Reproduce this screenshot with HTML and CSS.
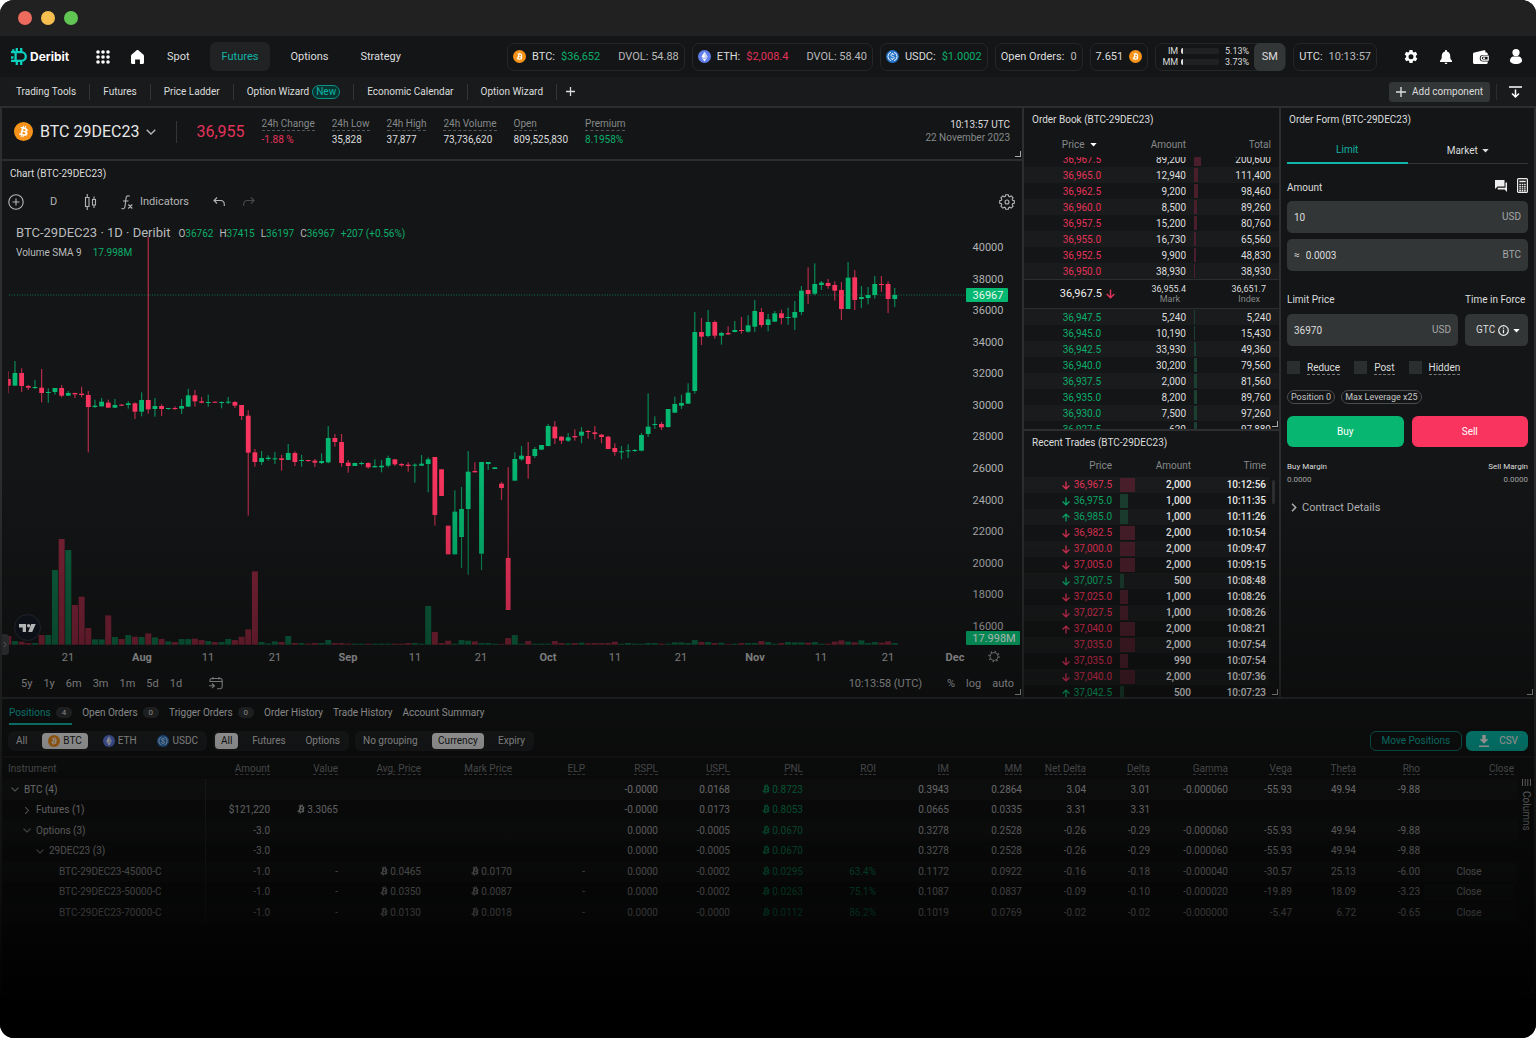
FILE: index.html
```html
<!DOCTYPE html>
<html lang="en">
<head>
<meta charset="utf-8">
<title>Deribit – BTC 29DEC23</title>
<meta name="viewport" content="width=device-width, initial-scale=1">
<link rel="stylesheet" href="styles.css">
</head>
<body>
<svg class="sprite" aria-hidden="true">
  <symbol id="btc-mark" viewBox="8 5.500 16 21"><path fill="currentColor" d="M23.189 14.02c.314-2.096-1.283-3.223-3.465-3.975l.708-2.84-1.728-.43-.69 2.765c-.454-.114-.92-.22-1.385-.326l.695-2.783L15.596 6l-.708 2.839c-.376-.086-.746-.17-1.104-.26l.002-.009-2.384-.595-.46 1.846s1.283.294 1.256.312c.7.175.826.638.805 1.006l-.806 3.235c.048.012.11.03.18.057l-.183-.045-1.13 4.532c-.086.212-.303.531-.793.41.018.025-1.256-.313-1.256-.313l-.858 1.978 2.25.561c.418.105.828.215 1.231.318l-.715 2.872 1.727.43.708-2.84c.472.127.93.245 1.378.357l-.706 2.828 1.728.43.715-2.866c2.948.558 5.164.333 6.097-2.333.752-2.146-.037-3.385-1.588-4.192 1.13-.26 1.98-1.003 2.207-2.538zm-3.95 5.538c-.533 2.147-4.148.986-5.32.695l.95-3.805c1.172.293 4.929.872 4.37 3.11zm.535-5.569c-.487 1.953-3.495.96-4.47.717l.86-3.45c.975.243 4.118.696 3.61 2.733z"/></symbol>
  <symbol id="coin-btc" viewBox="0 0 32 32"><circle cx="16" cy="16" r="16" fill="#f7931a"/><svg x="8" y="5.500" width="16" height="21" color="#fff"><use href="#btc-mark" width="16" height="21"/></svg></symbol>
  <symbol id="coin-eth" viewBox="0 0 32 32"><circle cx="16" cy="16" r="16" fill="#627eea"/><path fill="#fff" d="M16 4l7.500 12.400L16 21l-7.500-4.600z"/><path fill="#c5d0fa" d="M16 4v17l7.500-4.600z"/><path fill="#fff" d="M16 22.500l7.500-4.500L16 28l-7.500-10z"/></symbol>
  <symbol id="coin-usdc" viewBox="0 0 32 32"><circle cx="16" cy="16" r="16" fill="#2775ca"/><path fill="none" stroke="#fff" stroke-width="2.200" d="M12.500 5.500a11 11 0 0 0 0 21M19.500 5.500a11 11 0 0 1 0 21M20 12.500c-.5-1.800-2-2.600-4-2.600-2.300 0-3.900 1-3.900 2.900 0 4.200 8 1.900 8 6.300 0 2-1.800 3-4.100 3s-4-.9-4.400-3M16 7.500v2.400M16 22v2.500"/></symbol>
  <symbol id="caret" viewBox="0 0 8 5"><path fill="currentColor" d="M0 0h8L4 4.500z"/></symbol>
  <symbol id="chevron" viewBox="0 0 10 6"><path fill="none" stroke="currentColor" stroke-width="1.300" d="M.7.700L5 5 9.300.7"/></symbol>
  <symbol id="arrow" viewBox="0 0 8 9"><path fill="none" stroke="currentColor" stroke-width="1.300" d="M4 .5v7.300M.6 4.500L4 7.900l3.400-3.400"/></symbol>
  <symbol id="plus" viewBox="0 0 10 10"><path stroke="currentColor" stroke-width="1.400" d="M5 0v10M0 5h10"/></symbol>
</svg>

<div class="window">
  <div class="titlebar"><i class="dot dot-red"></i><i class="dot dot-yellow"></i><i class="dot dot-green"></i></div>

  <header class="nav">
    <a class="logo" href="#">
      <svg width="17" height="17" viewBox="0 0 17 17" aria-hidden="true"><path fill="none" stroke="#0ccfbd" stroke-width="2.300" d="M0 4.200h10.500a4.300 4.300 0 0 1 0 8.600H0M4.600 4.200v8.600M5.800 0v4M10.200 0v4M5.800 13v4M10.200 13v4M2.300 1.300v3M0 9.500h2.500"/></svg>
      <span>Deribit</span>
    </a>
    <button class="nav-icon" aria-label="Apps"><svg width="14" height="14" viewBox="0 0 14 14"><g fill="#fff"><circle cx="2" cy="2" r="1.800"/><circle cx="7" cy="2" r="1.800"/><circle cx="12" cy="2" r="1.800"/><circle cx="2" cy="7" r="1.800"/><circle cx="7" cy="7" r="1.800"/><circle cx="12" cy="7" r="1.800"/><circle cx="2" cy="12" r="1.800"/><circle cx="7" cy="12" r="1.800"/><circle cx="12" cy="12" r="1.800"/></g></svg></button>
    <button class="nav-icon" aria-label="Home"><svg width="13" height="14" viewBox="0 0 13 14"><path fill="#fff" d="M6.500 0c.4 0 .8.200 1.100.4l4.700 4c.4.400.7.900.7 1.500V12.500c0 .8-.6 1.500-1.400 1.500H8.900V9.500H4.100V14H1.400C.6 14 0 13.300 0 12.500V5.900c0-.6.300-1.100.7-1.500l4.700-4c.3-.2.700-.4 1.100-.4z"/></svg></button>
    <nav class="menu">
      <a href="#">Spot</a><a href="#" class="active">Futures</a><a href="#">Options</a><a href="#">Strategy</a>
    </nav>
    <div class="pills">
      <div class="pill"><svg width="13" height="13"><use href="#coin-btc"/></svg><span>BTC:</span><span class="up">$36,652</span><span class="dvol">DVOL: 54.88</span></div>
      <div class="pill"><svg width="13" height="13"><use href="#coin-eth"/></svg><span>ETH:</span><span class="down">$2,008.4</span><span class="dvol">DVOL: 58.40</span></div>
      <div class="pill"><svg width="13" height="13"><use href="#coin-usdc"/></svg><span>USDC:</span><span class="up">$1.0002</span></div>
      <div class="pill"><span>Open Orders:</span><span class="soft">0</span></div>
      <div class="pill"><span>7.651</span><svg width="13" height="13"><use href="#coin-btc"/></svg></div>
      <div class="pill margin-pill">
        <div class="meters">
          <span>IM</span><i class="meter"></i><span>5.13%</span>
          <span>MM</span><i class="meter"></i><span>3.73%</span>
        </div>
        <b>SM</b>
      </div>
      <div class="pill"><span>UTC:</span><span class="soft">10:13:57</span></div>
    </div>
    <div class="nav-actions">
      <button aria-label="Settings"><svg width="14" height="14" viewBox="0 0 14 14"><path fill="#fff" fill-rule="evenodd" d="M5.500 0h3l.4 1.900 1 .6 1.900-.7 1.500 2.600-1.500 1.300v1.600l1.500 1.300-1.500 2.600-1.900-.7-1 .6-.4 1.900h-3l-.4-1.900-1-.6-1.900.7L.7 8.600l1.500-1.300V5.700L.7 4.400l1.500-2.600 1.900.7 1-.6zM7 4.200a2.500 2.500 0 1 0 0 5 2.500 2.500 0 0 0 0-5z"/></svg></button>
      <button aria-label="Notifications"><svg width="12" height="14" viewBox="0 0 12 14"><path fill="#fff" d="M6 0c.6 0 1 .4 1 1v.5c1.900.5 3.200 2 3.200 4.300 0 2.600.3 3.800 1.800 5V12H0v-1.200c1.500-1.200 1.800-2.400 1.800-5 0-2.300 1.300-3.800 3.200-4.300V1c0-.6.4-1 1-1zM4.600 12.700h2.800c0 .7-.6 1.300-1.400 1.300s-1.400-.6-1.400-1.300z"/></svg></button>
      <button aria-label="Wallet"><svg width="16" height="14" viewBox="0 0 16 14"><path fill="#fff" d="M1.500 2.500L11 .3c.8-.2 1.500.3 1.500 1v1.200h.8c.8 0 1.500.7 1.500 1.500V5H10a3 3 0 0 0 0 6.500h4.800v1c0 .8-.7 1.500-1.500 1.500H1.500C.7 14 0 13.300 0 12.500V4c0-.8.700-1.500 1.500-1.500z"/><path fill="none" stroke="#fff" stroke-width="1.200" d="M15.200 6.200h-4.900a2 2 0 0 0 0 4h4.900z"/><circle cx="11" cy="8.200" r="1" fill="#fff"/></svg></button>
      <button aria-label="Account"><svg width="12" height="15" viewBox="0 0 12 15"><circle cx="6" cy="3.600" r="3.600" fill="#fff"/><path fill="#fff" d="M3.500 7.500h5C10.500 7.500 12 9.500 12 11.500S9.500 15 6 15s-6-1.500-6-3.500 1.500-4 3.500-4z"/></svg></button>
    </div>
  </header>

  <div class="tools">
    <nav class="tool-links">
      <a href="#">Trading Tools</a><a href="#">Futures</a><a href="#">Price Ladder</a><a href="#">Option Wizard <em>New</em></a><a href="#">Economic Calendar</a><a href="#">Option Wizard</a>
    </nav>
    <button class="add-tab" aria-label="Add tab"><svg width="9" height="9"><use href="#plus"/></svg></button>
    <button class="add-component"><svg width="10" height="10"><use href="#plus"/></svg>Add component</button>
    <button class="collapse" aria-label="Collapse"><svg width="13" height="12" viewBox="0 0 13 12"><path fill="none" stroke="#fff" stroke-width="1.500" d="M0 1h13M6.500 3.500V11M3 7.500l3.500 3.500L10 7.500"/></svg></button>
  </div>

  <main class="workspace">
    <div class="col">
      <section class="panel ticker">
        <svg width="19" height="19"><use href="#coin-btc"/></svg>
        <h1>BTC 29DEC23</h1>
        <svg class="soft" width="10" height="6"><use href="#chevron"/></svg>
        <strong class="last down">36,955</strong>
        <dl class="stats">
          <div><dt>24h Change</dt><dd class="down">-1.88 %</dd></div>
          <div><dt>24h Low</dt><dd>35,828</dd></div>
          <div><dt>24h High</dt><dd>37,877</dd></div>
          <div><dt>24h Volume</dt><dd>73,736,620</dd></div>
          <div><dt>Open</dt><dd>809,525,830</dd></div>
          <div><dt>Premium</dt><dd class="up">8.1958%</dd></div>
        </dl>
        <div class="clock"><span>10:13:57 UTC</span><span class="muted">22 November 2023</span></div>
      </section>

      <section class="panel chart">
        <h2>Chart (BTC-29DEC23)</h2>
        <div class="chart-tools">
          <button aria-label="Add symbol"><svg width="16" height="16" viewBox="0 0 16 16"><g fill="none" stroke="currentColor" stroke-width="1.100"><circle cx="8" cy="8" r="7.200"/><path d="M8 4.500v7M4.500 8h7"/></g></svg></button>
          <button class="interval">D</button>
          <button aria-label="Chart type"><svg width="13" height="16" viewBox="0 0 13 16"><path fill="none" stroke="currentColor" stroke-width="1.100" d="M1.500 3.500h3.500v9H1.500zM3.200 0v3.500M3.200 12.500V16M8.500 5.500h3v5.500h-3zM10 2.500v3M10 11v3"/></svg></button>
          <button class="indicators"><svg width="12" height="15" viewBox="0 0 12 15"><path fill="none" stroke="currentColor" stroke-width="1.100" d="M8.800 1.200C6.500.2 5.300 1.200 5 3.200L4 11.500c-.3 2-1.500 2.700-3.500 2M2 6h5.500M7.300 9.500l4 4M11.300 9.500l-4 4"/></svg>Indicators</button>
          <button aria-label="Undo"><svg width="12" height="10" viewBox="0 0 12 10"><path fill="none" stroke="currentColor" stroke-width="1.100" d="M4 .5l-3 3 3 3M1 3.500h6.500c2.300 0 3.800 1.600 3.800 4V9"/></svg></button>
          <button class="off" aria-label="Redo"><svg width="12" height="10" viewBox="0 0 12 10"><path fill="none" stroke="currentColor" stroke-width="1.100" d="M8 .5l3 3-3 3M11 3.500H4.500C2.200 3.500.7 5.100.7 7.500V9"/></svg></button>
          <button class="chart-settings" aria-label="Chart settings"><svg width="16" height="16" viewBox="0 0 16 16"><path fill="none" stroke="currentColor" stroke-width="1.100" d="M6.700.7h2.600l.4 1.700 1 .4 1.500-.9 1.900 1.900-.9 1.500.4 1 1.700.4v2.600l-1.700.4-.4 1 .9 1.500-1.900 1.900-1.500-.9-1 .4-.4 1.700H6.700l-.4-1.700-1-.4-1.500.9-1.900-1.900.9-1.500-.4-1L.7 9.300V6.700l1.700-.4.4-1-.9-1.500 1.900-1.900 1.500.9 1-.4z"/><circle cx="8" cy="8" r="2" fill="none" stroke="currentColor" stroke-width="1.100"/></svg></button>
        </div>
        <div class="plot">
          <svg id="plot" viewBox="2 219 1020 450" role="img" aria-label="BTC-29DEC23 daily candles"></svg>
          <div class="legend">
            <p><span class="symbol">BTC-29DEC23 · 1D · Deribit</span><span>O<b>36762</b></span><span>H<b>37415</b></span><span>L<b>36197</b></span><span>C<b>36967</b></span><span><b>+207 (+0.56%)</b></span></p>
            <p class="study">Volume SMA 9 <b>17.998M</b></p>
          </div>
        </div>
        <div class="ranges">
          <button>5y</button><button>1y</button><button>6m</button><button>3m</button><button>1m</button><button>5d</button><button>1d</button>
          <button class="goto" aria-label="Go to date"><svg width="14" height="13" viewBox="0 0 14 13"><path fill="none" stroke="currentColor" stroke-width="1.100" d="M1 5V3.200C1 2 1.800 1.500 2.700 1.500h8.600c1.200 0 1.900.6 1.900 1.700v6.600c0 1.100-.7 1.900-1.900 1.900H8M1 4.500h12M4 0v2.500M10 0v2.500M0 8.800h5M3 6.500l2.400 2.300L3 11"/></svg></button>
          <span class="chart-time">10:13:58 (UTC)</span>
          <button>%</button><button>log</button><button>auto</button>
        </div>
      </section>
    </div>

    <div class="col">
      <section class="panel book">
        <h2>Order Book (BTC-29DEC23)</h2>
        <table class="ladder">
          <thead><tr><th>Price <svg class="bright" width="7" height="4"><use href="#caret"/></svg></th><th>Amount</th><th>Total</th></tr></thead>
          <tbody class="asks" id="asks"></tbody>
          <tbody class="mid"><tr><td>36,967.5 <svg class="down" width="9" height="10"><use href="#arrow"/></svg></td><td>36,955.4<small>Mark</small></td><td>36,651.7<small>Index</small></td></tr></tbody>
          <tbody class="bids" id="bids"></tbody>
        </table>
      </section>
      <section class="panel trades">
        <h2>Recent Trades (BTC-29DEC23)</h2>
        <table class="ladder">
          <thead><tr><th>Price</th><th>Amount</th><th>Time</th></tr></thead>
          <tbody id="trades"></tbody>
        </table>
        <i class="scrollbar"></i>
      </section>
    </div>

    <section class="panel form">
      <h2>Order Form (BTC-29DEC23)</h2>
      <form>
        <div class="form-tabs"><button type="button" class="active">Limit</button><button type="button">Market <svg width="7" height="4"><use href="#caret"/></svg></button></div>
        <div class="field-head">
          <label for="amount">Amount</label>
          <svg width="12" height="12" viewBox="0 0 12 12"><path fill="#eee" d="M0 0h9.500v6.500H2.500L0 9zM10.500 2.500H12V12l-2.400-2.400H2.700V7.700h7.800z"/></svg>
          <svg width="11" height="15" viewBox="0 0 11 15"><rect x=".6" y=".6" width="9.800" height="13.800" rx="1" fill="none" stroke="#eee" stroke-width="1.200"/><path stroke="#eee" stroke-width="1.600" d="M2.300 3.500h6.400"/><path stroke="#eee" stroke-width="1.400" stroke-dasharray="1.600 .8" d="M2.300 6.500h6.600M2.300 8.700h6.600M2.300 10.900h6.600M2.300 12.800h6.600"/></svg>
        </div>
        <div class="field"><input id="amount" type="text" value="10"><span>USD</span></div>
        <div class="field"><i>≈</i><input type="text" value="0.0003" aria-label="Amount in BTC"><span>BTC</span></div>
        <div class="price-row">
          <div class="price-cell"><label for="price">Limit Price</label><div class="field"><input id="price" type="text" value="36970"><span>USD</span></div></div>
          <div class="tif-cell"><label for="tif">Time in Force</label>
            <div class="tif"><select id="tif"><option>GTC</option></select>
              <span class="tif-icons"><svg width="11" height="11" viewBox="0 0 11 11"><circle cx="5.500" cy="5.500" r="4.800" fill="none" stroke="#eee" stroke-width="1.200"/><path stroke="#eee" stroke-width="1.200" d="M5.500 4.700v3.500M5.500 2.500v1.200"/></svg><svg class="bright" width="7" height="4"><use href="#caret"/></svg></span></div>
          </div>
        </div>
        <div class="checks">
          <input type="checkbox" id="reduce"><label for="reduce">Reduce</label>
          <input type="checkbox" id="post"><label for="post">Post</label>
          <input type="checkbox" id="hidden"><label for="hidden">Hidden</label>
        </div>
        <div class="chips"><span>Position 0</span><span>Max Leverage x25</span></div>
        <div class="submit"><button type="button" class="buy">Buy</button><button type="button" class="sell">Sell</button></div>
        <div class="margins"><p>Buy Margin<span>0.0000</span></p><p>Sell Margin<span>0.0000</span></p></div>
        <button type="button" class="contract"><svg width="6" height="9" viewBox="0 0 6 9"><path fill="none" stroke="currentColor" stroke-width="1.500" d="M1 .8l3.700 3.700L1 8.200"/></svg>Contract Details</button>
      </form>
    </section>

    <section class="panel positions">
      <nav class="tabs">
        <a href="#" class="active">Positions <small>4</small></a><a href="#">Open Orders <small>0</small></a><a href="#">Trigger Orders <small>0</small></a><a href="#">Order History</a><a href="#">Trade History</a><a href="#">Account Summary</a>
      </nav>
      <div class="filters">
        <div class="group coins"><button>All</button><button class="on"><svg width="12" height="12"><use href="#coin-btc"/></svg>BTC</button><button><svg width="12" height="12"><use href="#coin-eth"/></svg>ETH</button><button><svg width="12" height="12"><use href="#coin-usdc"/></svg>USDC</button></div>
        <div class="group kinds"><button class="on">All</button><button>Futures</button><button>Options</button></div>
        <div class="group sorts"><button>No grouping</button><button class="on">Currency</button><button>Expiry</button></div>
        <button class="move">Move Positions</button>
        <button class="csv"><svg width="10" height="12" viewBox="0 0 10 12"><path fill="#fff" d="M3.300 0h3.400v4.200H9.500L5 8.700.5 4.200h2.800zM0 10.400h10V12H0z"/></svg>CSV</button>
      </div>
      <div class="table-wrap">
        <table class="grid">
          <colgroup><col class="c-name"><col class="c-69"><col class="c-68"><col class="c-83"><col class="c-91"><col class="c-73" span="2"><col class="c-72"><col class="c-73" span="4"><col class="c-64" span="2"><col class="c-78"><col class="c-64" span="3"><col class="c-94"></colgroup>
          <thead><tr><th>Instrument</th><th><span>Amount</span></th><th><span>Value</span></th><th><span>Avg. Price</span></th><th><span>Mark Price</span></th><th><span>ELP</span></th><th><span>RSPL</span></th><th><span>USPL</span></th><th><span>PNL</span></th><th><span>ROI</span></th><th><span>IM</span></th><th><span>MM</span></th><th><span>Net Delta</span></th><th><span>Delta</span></th><th><span>Gamma</span></th><th><span>Vega</span></th><th><span>Theta</span></th><th><span>Rho</span></th><th><span>Close</span></th></tr></thead>
          <tbody id="positions"></tbody>
        </table>
        <button class="columns"><svg width="9" height="7" viewBox="0 0 9 7"><path stroke="currentColor" d="M.5 0v7M3.200 0v7M5.800 0v7M8.500 0v7"/></svg><span>Columns</span></button>
      </div>
    </section>
  </main>
  <div class="fade"></div>
</div>
<script src="app.js"></script>
</body>
</html>
```
FILE: styles.css
```css
:root {
  --bg: #141516;
  --line: #2d2e2f;
  --text: #dcddde;
  --muted: #85898a;
  --up: #0cae6b;
  --down: #e3335a;
  --teal: #12b5a6;
  --field: #333637;
}

* { box-sizing: border-box; }

body {
  margin: 0;
  background: #fff;
  color: var(--text);
  font: 10px/12px Roboto, "Liberation Sans", sans-serif;
}

h1, h2, p, dl, dd { margin: 0; font-weight: 400; }
a { color: inherit; text-decoration: none; }
button, input, select { margin: 0; padding: 0; border: 0; background: none; color: inherit; font: inherit; }
button { display: flex; align-items: center; justify-content: center; }
svg { display: block; flex: none; }
table { border-collapse: collapse; }
th { font-weight: 400; }

.sprite { position: absolute; width: 0; height: 0; }
.up { color: var(--up); }
.down { color: var(--down); }
.muted { color: var(--muted); }
.soft { color: #b9bbbc; }
.bright { color: #fff; }

.window { position: relative; min-height: 100vh; border-radius: 14px; overflow: hidden; background: var(--bg); }
.fade { position: absolute; inset: 0; pointer-events: none; background: linear-gradient(transparent 45%, rgba(0, 0, 0, .42) 70%, rgba(0, 0, 0, .74) 87%, #000 97%); }

.titlebar { display: flex; align-items: center; gap: 9px; height: 36px; padding-left: 18px; background: #212121; }
.dot { width: 14px; height: 14px; border-radius: 50%; }
.dot-red { background: #ed6a5e; }
.dot-yellow { background: #f5bf4f; }
.dot-green { background: #61c554; }

/* Main navigation */
.nav { display: flex; align-items: center; height: 41px; padding: 0 3px 0 11px; font-size: 11px; }
.logo { display: flex; align-items: center; gap: 2px; width: 74px; color: #fff; font: 700 12px/14px Inter, "Open Sans", sans-serif; }
.nav-icon { width: 35px; height: 28px; }
.menu { display: flex; gap: 8px; }
.menu a { padding: 8px 12px; border-radius: 6px; line-height: 13px; }
.menu a.active { background: #202223; color: var(--teal); }
.pills { display: flex; gap: 7px; margin-left: auto; }
.pill { display: flex; align-items: center; gap: 6px; height: 28px; padding: 0 5px; border: 1px solid #242627; border-radius: 7px; white-space: nowrap; }
.dvol { margin-left: 12px; color: #b9bbbc; }
.margin-pill { padding-right: 0; gap: 5px; }
.margin-pill b { display: flex; align-items: center; justify-content: center; width: 31px; height: 28px; border-radius: 6px; background: var(--field); font-weight: 400; }
.meters { display: grid; grid-template-columns: 17px 38px 27px; align-items: center; gap: 1px 3px; font-size: 9px; line-height: 10px; text-align: right; }
.meter { height: 6px; border-radius: 2px; background: linear-gradient(90deg, #ddd 2px, #1f2122 2px); }
.nav-actions { display: flex; margin-left: 16px; }
.nav-actions button { width: 35px; height: 28px; }

/* Tool shortcuts */
.tools { display: flex; align-items: center; height: 29px; padding-right: 2px; background: #191a1b; }
.tool-links { display: flex; padding-left: 3px; }
.tool-links a { display: flex; align-items: center; gap: 3px; height: 16px; padding: 0 13px; border-right: 1px solid #333536; }
.tool-links em { padding: 0 3px; border: 1px solid #0f9286; border-radius: 7px; background: #08332f; color: var(--teal); font-style: normal; line-height: 12px; }
.add-tab { width: 26px; height: 20px; }
.add-component { gap: 6px; height: 20px; margin-left: auto; padding: 0 7px; border-radius: 3px; background: #333637; }
.collapse { width: 38px; height: 16px; margin-left: 6px; border-left: 1px solid #2b2d2e; }

/* Panels */
.workspace { display: grid; grid-template-columns: minmax(0, 1fr) 255px 253px; gap: 2px; padding: 2px; background: var(--line); }
.col { display: flex; flex-direction: column; gap: 2px; min-width: 0; }
.panel { position: relative; background: var(--bg); }
.panel::after { content: ""; position: absolute; right: 1px; bottom: 2px; width: 5px; height: 5px; border: solid #a6a8a9; border-width: 0 1px 1px 0; }
.panel h2 { padding: 6px 8px; font-size: 10px; line-height: 12px; }
.panel.chart h2 { padding: 7px 8px 5px; }

.ticker { display: flex; align-items: center; height: 51px; padding: 0 12px; }
.ticker > * { margin-bottom: 4px; }
.ticker h1 { margin-left: 7px; margin-right: 7px; font-size: 16px; line-height: 20px; color: #e6e7e8; }
.last { margin-left: 20px; padding-left: 19px; border-left: 1px solid #333536; font-size: 16px; font-weight: 400; line-height: 22px; }
.stats { display: flex; gap: 17px; margin-left: 17px; }
.stats dt { border-bottom: 1px dashed #55585a; line-height: 12px; color: var(--muted); }
.stats div { display: flex; flex-direction: column; align-items: flex-start; gap: 3px; }
.clock { display: flex; flex-direction: column; gap: 1px; margin-left: auto; text-align: right; }

.chart-tools { display: flex; align-items: center; height: 34px; padding: 0 7px 0 6px; color: #b4b6b7; font-size: 11px; }
.chart-tools button { height: 24px; margin-right: 24px; }
.chart-tools .interval { margin-right: 25px; width: 11px; }
.chart-tools .indicators { gap: 7px; }
.chart-tools button:nth-child(5) { margin-right: 18px; }
.chart-tools .off { color: #47494a; }
.chart-tools .chart-settings { margin-left: auto; margin-right: 0; }
.plot { position: relative; }
.plot > svg { width: 100%; height: auto; }
.legend { position: absolute; top: 5px; left: 14px; color: #b9bbbc; font-size: 10px; }
.legend p { display: flex; align-items: baseline; gap: 6px; line-height: 18px; }
.legend b { color: var(--up); font-weight: 400; }
.legend .symbol { margin-right: 2px; font-size: 13px; }
.legend .study { gap: 11px; line-height: 20px; }
.tick { fill: #b0b2b3; font-size: 11px; }
.tick-strong { font-weight: 700; }
.tag-text { fill: #e4f7ee; font-size: 11px; }
.bull { fill: #05b871; stroke: none; }
.bear { fill: #f9355f; }
.volume { opacity: .47; }
.wick { opacity: .7; }
.ranges { display: flex; align-items: center; height: 28px; padding: 1px 8px 0 19px; color: #b4b6b7; font-size: 11px; }
.ranges button { margin-right: 11px; }
.ranges .goto { margin-left: 16px; }
.chart-time { margin-left: auto; margin-right: 25px; }
.ranges button:last-child { margin-right: 0; }

/* Order book and trades */
.ladder, .ladder thead, .ladder tbody { display: block; width: 100%; }
.ladder tr { display: grid; grid-template-columns: 77fr 85fr 93fr; height: 16px; line-height: 16px; }
.ladder th, .ladder td { position: relative; padding: 0; text-align: right; }
.ladder th { color: var(--muted); line-height: 25px; }
.ladder th svg { display: inline-block; margin: 0 4px 1px 3px; }
.ladder thead tr { height: 26px; }
.book .ladder th:last-child, .book .ladder td:last-child { padding-right: 8px; }
.bar { position: absolute; top: 1px; left: 8px; height: 14px; background: #4a1f2b; }
.bar.buy-side { background: #1b3f30; }
.book .ladder thead { height: 25px; }
.asks, .bids { overflow: hidden; }
.asks tr, .bids tr { line-height: 18px; }
.book .asks { display: flex; flex-direction: column; justify-content: flex-end; height: 122px; }
.book .bids { height: 120px; }
.asks tr { flex: none; }
.asks tr:nth-child(even), .bids tr:nth-child(odd), #trades tr:nth-child(odd) { background: #1a1b1c; }
.mid { border: solid #2b2d2e; border-width: 1px 0; }
.book .mid tr { height: 28px; font-size: 9px; line-height: 10px; align-items: center; }
.mid td:first-child { display: flex; align-items: center; justify-content: flex-end; gap: 4px; margin-right: -14px; font-size: 11px; color: #f0f0f0; }
.book .mid td:last-child { padding-right: 13px; }
.mid small { display: block; padding-right: 6px; color: var(--muted); font-size: 9px; }
.trades { height: 266px; overflow: hidden; }
.trades h2 { padding-bottom: 4px; }
.trades .ladder thead tr { height: 24px; }
.trades .ladder tr { grid-template-columns: 88fr 79fr 75fr; margin-right: 10px; padding-right: 3px; }
.trades .ladder td:first-child { display: flex; align-items: center; justify-content: flex-end; gap: 4px; }
.trades .ladder td:nth-child(2), .trades .ladder td:nth-child(3) { color: #f2f2f2; font-weight: 500; }
.rise { transform: rotate(180deg); }
.scrollbar { position: absolute; top: 49px; right: 4px; width: 3px; height: 24px; border-radius: 2px; background: #2d2f30; }

/* Order form */
.form form { display: flex; flex-direction: column; padding: 0 6px; }
.form-tabs { display: flex; height: 32px; margin-bottom: 16px; border-bottom: 1px solid #333536; }
.form-tabs button { flex: 1; gap: 4px; padding-top: 6px; }
.form-tabs .active { margin-bottom: -1px; border-bottom: 2px solid var(--teal); color: var(--teal); }
.field-head { display: flex; align-items: center; gap: 10px; margin-bottom: 6px; height: 15px; }
.field-head label { margin-right: auto; }
.field-head svg { margin-bottom: 4px; }
.field { display: flex; align-items: center; gap: 6px; height: 32px; margin-bottom: 6px; padding: 0 7px; border-radius: 5px; background: var(--field); }
.field i { font-style: normal; }
.field input { flex: 1; min-width: 0; height: 28px; }
.field span { color: #a4a7a8; }
.price-row { display: flex; gap: 7px; margin-top: 17px; }
.price-row label { display: block; margin-bottom: 8px; white-space: nowrap; }
.price-cell { flex: 1; min-width: 0; }
.price-cell .field { margin-bottom: 0; }
.tif-cell { width: 63px; }
.tif { position: relative; }
.tif select { width: 100%; height: 32px; padding-left: 11px; border-radius: 5px; background: var(--field); appearance: none; }
.tif-icons { position: absolute; top: 11px; right: 8px; display: flex; align-items: center; gap: 4px; pointer-events: none; }
.checks { display: flex; align-items: center; height: 15px; margin-top: 14px; }
.checks input { width: 13px; height: 13px; margin-right: 7px; background: #2b2e2f; appearance: none; }
.checks label { margin-right: 14px; border-bottom: 1px dashed #77797a; line-height: 13px; }
.chips { display: flex; gap: 6px; margin: 15px 0 12px; font-size: 9px; line-height: 12px; color: #c4c6c7; }
.chips span { padding: 0 3px; border: 1px solid #4a4c4d; border-radius: 7px; }
.submit { display: flex; gap: 8px; }
.submit button { flex: 1; height: 31px; border-radius: 6px; color: #fff; }
.buy { background: #07b670; }
.sell { background: #f9355f; }
.margins { display: flex; justify-content: space-between; margin: 13px 0 15px; font-size: 8px; line-height: 13px; }
.margins span { display: block; color: #a4a7a8; }
.margins p:last-child { text-align: right; }
.contract { align-self: flex-start; gap: 5px; margin-left: 4px; font-size: 11px; line-height: 13px; color: #b9bbbc; }

/* Positions */
.positions { grid-column: 1 / -1; min-height: 296px; }
.tabs { display: flex; gap: 10px; padding-left: 7px; }
.tabs a { display: flex; align-items: center; gap: 5px; height: 26px; padding-top: 3px; border-bottom: 2px solid transparent; white-space: nowrap; }
.tabs .active { border-color: var(--teal); color: var(--teal); }
.tabs small { padding: 0 6px; border-radius: 6px; background: #303233; color: var(--text); font-size: 8px; line-height: 11px; }
.filters { display: flex; gap: 6px; height: 33px; padding: 6px 6px 0; border-bottom: 2px solid #1e1f20; }
.group { display: flex; align-items: center; height: 20px; padding: 0 3px 0 2px; border-radius: 6px; background: #212324; }
.group button { gap: 3px; height: 16px; border-radius: 4px; padding: 0 6px; }
.group .on { background: #f4f4f4; color: #1b1c1d; }
.coins, .kinds, .sorts { justify-content: space-between; }
.coins { width: 199px; }
.kinds { width: 136px; }
.sorts { width: 179px; }
.move { height: 20px; margin-left: auto; padding: 0 11px; border: 1px solid #0e7f75; border-radius: 6px; color: var(--teal); }
.csv { gap: 10px; height: 20px; margin-left: -2px; padding: 0 10px 0 13px; border-radius: 6px; background: #07bfae; color: #fff; }
.table-wrap { display: flex; align-items: flex-start; }
.grid { flex: 1; table-layout: fixed; font-size: 10px; line-height: 12px; }
.grid th, .grid td { padding: 0 4px 0 0; text-align: right; white-space: nowrap; }
.grid th { height: 21px; color: var(--muted); }
.grid th span { border-bottom: 1px dashed #6a6d6e; }
.grid th:first-child { padding-left: 6px; text-align: left; }
.grid td:first-child { text-align: left; border-right: 1px solid #2d2f30; }
.grid tbody tr:nth-child(odd) { height: 21px; background: #1a1b1c; }
.grid tbody tr:nth-child(even) { height: 20px; }
.grid .tree { display: flex; align-items: center; gap: 5px; }
.grid .tree svg { color: #b9bbbc; }
.level-0 { padding-left: 9px; }
.level-1 { padding-left: 21px; }
.level-2 { padding-left: 34px; }
.level-3 { padding-left: 57px; }
.side { transform: rotate(-90deg); }
.btc { display: inline-block; margin-right: 2px; vertical-align: -1px; }
.grid td button { width: 100%; height: 16px; background: #1c1e1f; }
.c-name { width: 203px; }
.c-64 { width: 64px; }
.c-68 { width: 68px; }
.c-69 { width: 69px; }
.c-72 { width: 72px; }
.c-73 { width: 73px; }
.c-78 { width: 78px; }
.c-83 { width: 83px; }
.c-91 { width: 91px; }
.c-94 { width: 94px; }
.columns { flex-direction: column; gap: 5px; width: 16px; margin-top: 21px; color: #b9bbbc; }
.columns span { writing-mode: vertical-rl; }
```
FILE: app.js
```js
const NS = 'http://www.w3.org/2000/svg';
const $ = (id) => document.getElementById(id);

/* ---- Chart ---- */
const STEP = 6.665;
const FIRST_X = 8.3;
const BASELINE = 644.7;

// Each bar: side, high, low, body top, body bottom, in thirds of a pixel below `top`.
const segments = [
  { top: 230, bars: `r424,490,447,467 g393,467,429,467 r415,486,429,468 r465,480,468,473 g450,477,471,474 r417,517,473,489 g475,518,486,489 g474,494,474,486 r465,502,474,497 g483,498,489,497 r488,504,489,493 r470,502,491,495 r483,667,495,531 g509,534,527,531 g504,530,515,529 r509,533,518,533 g507,534,525,533 r522,528,524,527 g514,536,520,525 r517,567,520,545 g487,559,510,545 r20,551,510,538 g504,560,528,537 r523,558,528,537 g534,539,534,537 r529,540,534,537 g507,552,528,536 g476,530,496,530 r480,530,496,514 r501,520,514,518 g494,530,516,518 r515,519,515,518 g514,535,516,519 g501,522,515,518 r513,534,516,527 r525,570,525,558 r541,857,557,668 r657,710,667,696 g663,705,684,696 g676,692,683,687 g666,702,685,688 r674,722,685,690 g642,690,669,690 r664,708,669,696 g674,710,690,693 r690,696,690,693 r687,711,692,698 g670,702,693,699 g588,700,624,697 r612,650,624,636 r612,710,636,699 r690,728,698,708 g698,708,699,708 g695,706,699,702 r697,716,699,712 g688,712,708,712 g690,727,707,712 g677,712,684,707 r688,708,688,703` },
  { top: 380, bars: `r249,260,252,256 r247,275,254,258 g250,308,254,257 g225,258,251,257 g232,337,238,252 r231,437,231,405 r268,348,268,348 r437,523,437,523 g331,523,395,523 g321,564,387,471 g213,584,275,387 r247,277,273,277 g246,570,246,521 g246,270,246,252 g262,267,262,267 r306,360,311,324 r262,690,534,690 g217,302,237,302 g198,242,227,238 r186,296,228,252 g201,234,207,228 g195,209,195,209 g132,199,138,198 r123,192,140,175 r168,192,170,182 g159,186,172,182 r148,182,168,172 g141,190,155,167 r150,176,153,156 r138,178,157,162 r162,190,164,171 r168,208,170,207 r190,227,204,216 g198,238,214,217 g193,234,211,214 g207,216,210,213 g159,214,165,212 g40,171,140,162 g109,147,132,135 r126,150,132,142 g87,143,87,141 g50,99,72,98 g44,87,69,77` },
  { top: 240, bars: `g430,492,458,491 g216,461,276,453 r234,315,276,290 g210,292,246,288 r242,296,246,287 g275,314,279,287 r259,285,279,283 g243,277,270,276 r231,281,270,273 g226,278,256,275 g180,276,213,260 r204,262,216,255 g222,274,238,255 g213,246,220,245 r209,253,220,234 g203,254,231,234 g183,270,216,233 g138,225,152,216 r82,192,150,162 g70,165,132,161 g123,150,128,135 r117,146,129,138 r124,182,135,152 r126,240,150,207 g66,207,113,207 r90,210,112,180 g138,204,171,177 g141,193,165,174 g108,176,132,165 r108,156,132,135 r124,219,132,177 g144,201,165,177` },
];
const volumes = [26, 11, 9, 5, 5, 29, 29, 224, 317, 284, 119, 144, 50, 16, 16, 88, 23, 17, 29, 24, 23, 34, 22, 17, 10, 8, 17, 17, 18, 14, 11, 8, 8, 17, 14, 24, 46, 220, 8, 4, 10, 8, 26, 5, 5, 3, 5, 5, 14, 5, 5, 3, 3, 3, 3, 3, 3, 3, 3, 3, 5, 5, 3, 116, 38, 5, 12, 3, 14, 12, 10, 5, 5, 3, 2, 20, 29, 3, 11, 3, 3, 3, 11, 5, 4, 5, 6, 4, 5, 5, 5, 9, 3, 5, 3, 3, 5, 5, 3, 3, 7, 7, 5, 14, 8, 8, 5, 6, 2, 3, 5, 5, 5, 11, 8, 3, 5, 8, 7, 7, 6, 8, 3, 3, 9, 13, 9, 7, 13, 5, 8, 6, 10, 5];

function draw(tag, attrs, text) {
  const node = document.createElementNS(NS, tag);
  for (const key in attrs) node.setAttribute(key, attrs[key]);
  if (text) node.textContent = text;
  $('plot').append(node);
  return node;
}

function rect(cls, x, y, w, h) {
  const left = Math.max(x, 8.3);
  draw('rect', { class: cls, x: left, y, width: w - (left - x), height: h });
}

const bars = segments.flatMap(({ top, bars }) => bars.split(' ').map((s) => {
  const ys = s.slice(1).split(',').map((v) => top + v / 3);
  return { cls: s[0] === 'g' ? 'bull' : 'bear', ys };
}));

bars.forEach(({ cls }, i) => {
  const h = volumes[i] / 3;
  rect(cls + ' volume', FIRST_X + STEP * i - 3, BASELINE - h, 6, h);
});
draw('path', { d: 'M9 295H966', stroke: '#05b871', 'stroke-dasharray': '1 1.6', opacity: 0.6 });
bars.forEach(({ cls, ys: [high, low, top, bottom] }, i) => {
  const x = FIRST_X + STEP * i;
  rect(cls + ' wick', x - 0.6, high, 1.2, low - high);
  rect(cls, x - 2.4, top, 4.8, Math.max(1, bottom - top));
});

for (let p = 40000, y = 251; p >= 16000; p -= 2000, y += 31.57) {
  draw('text', { class: 'tick', x: 988, y, 'text-anchor': 'middle' }, String(p));
}
[['21', 68], ['Aug', 142], ['11', 208], ['21', 275], ['Sep', 348], ['11', 415], ['21', 481], ['Oct', 548], ['11', 615], ['21', 681], ['Nov', 755], ['11', 821], ['21', 888], ['Dec', 955]]
  .forEach(([label, x]) => draw('text', { class: 'tick' + (isNaN(label) ? ' tick-strong' : ''), x, y: 661, 'text-anchor': 'middle' }, label));

draw('rect', { x: 966, y: 288, width: 42, height: 14, rx: 1, fill: '#05b871' });
draw('text', { class: 'tag-text', x: 988, y: 299, 'text-anchor': 'middle' }, '36967');
draw('rect', { x: 966, y: 631, width: 54, height: 14, rx: 1, fill: '#05b871' });
draw('text', { class: 'tag-text', x: 994, y: 642, 'text-anchor': 'middle' }, '17.998M');
draw('circle', { cx: 994, cy: 656.5, r: 4, fill: 'none', stroke: '#8f9293' });
draw('circle', { cx: 994, cy: 656.5, r: 5, fill: 'none', stroke: '#8f9293', 'stroke-width': 1.6, 'stroke-dasharray': '1.3 2.63' });
draw('circle', { cx: 27.5, cy: 627.5, r: 13, fill: '#12151f', stroke: '#2c2f38' });
draw('path', { d: 'M19 624h7v8h-3.300v-4.600H19zM31.200 624h4.500l-3.500 8h-4z', fill: '#f1f2f3' });
draw('circle', { cx: 28.6, cy: 625.7, r: 1.7, fill: '#f1f2f3' });
draw('rect', { x: 0, y: 634, width: 9, height: 21, rx: 4, fill: '#37393a' });
draw('path', { d: 'M4 642l2 2.500-2 2.500', fill: 'none', stroke: '#777' });

/* ---- Order book ---- */
function ladder(id, side, rows) {
  $(id).innerHTML = rows.map(([price, amount, total]) => {
    const width = parseFloat(total.replace(',', '')) / 28500;
    return `<tr><td class="${side}">${price}</td><td>${amount}</td><td><i class="bar ${side === 'up' ? 'buy-side' : ''}" style="width:${width.toFixed(1)}px"></i>${total}</td></tr>`;
  }).join('');
}
ladder('asks', 'down', [
  ['36,967.5', '89,200', '200,600'], ['36,965.0', '12,940', '111,400'], ['36,962.5', '9,200', '98,460'], ['36,960.0', '8,500', '89,260'],
  ['36,957.5', '15,200', '80,760'], ['36,955.0', '16,730', '65,560'], ['36,952.5', '9,900', '48,830'], ['36,950.0', '38,930', '38,930'],
]);
ladder('bids', 'up', [
  ['36,947.5', '5,240', '5,240'], ['36,945.0', '10,190', '15,430'], ['36,942.5', '33,930', '49,360'], ['36,940.0', '30,200', '79,560'],
  ['36,937.5', '2,000', '81,560'], ['36,935.0', '8,200', '89,760'], ['36,930.0', '7,500', '97,260'], ['36,927.5', '620', '97,880'],
]);

/* ---- Recent trades: side, tick direction, price, amount, time ---- */
$('trades').innerHTML = [
  ['down', 'v', '36,967.5', '2,000', '10:12:56'], ['up', 'v', '36,975.0', '1,000', '10:11:35'], ['up', '^', '36,985.0', '1,000', '10:11:26'],
  ['down', 'v', '36,982.5', '2,000', '10:10:54'], ['down', 'v', '37,000.0', '2,000', '10:09:47'], ['down', 'v', '37,005.0', '2,000', '10:09:15'],
  ['up', 'v', '37,007.5', '500', '10:08:48'], ['down', 'v', '37,025.0', '1,000', '10:08:26'], ['down', 'v', '37,027.5', '1,000', '10:08:26'],
  ['down', '^', '37,040.0', '2,000', '10:08:21'], ['down', '', '37,035.0', '2,000', '10:07:54'], ['down', 'v', '37,035.0', '990', '10:07:54'],
  ['down', 'v', '37,040.0', '2,000', '10:07:36'], ['up', '^', '37,042.5', '500', '10:07:23'],
].map(([side, dir, price, amount, time]) => {
  const arrow = dir ? `<svg class="${dir === '^' ? 'rise' : ''}" width="8" height="9"><use href="#arrow"/></svg>` : '';
  const width = Math.round(parseFloat(amount.replace(',', '')) / 130);
  return `<tr><td class="${side}">${arrow}${price}</td><td><i class="bar ${side === 'up' ? 'buy-side' : ''}" style="width:${width}px"></i>${amount}</td><td>${time}</td></tr>`;
}).join('');

/* ---- Positions: level, expander, name, then the cells; "B" marks an amount in bitcoin ---- */
const coin = '<svg class="btc" width="8" height="10"><use href="#btc-mark"/></svg>';
$('positions').innerHTML = [
  '0|v|BTC (4)|||||||-0.0000|0.0168|B0.8723||0.3943|0.2864|3.04|3.01|-0.000060|-55.93|49.94|-9.88|',
  '1|>|Futures (1)|$121,220|B3.3065|||||-0.0000|0.0173|B0.8053||0.0665|0.0335|3.31|3.31|||||',
  '1|v|Options (3)|-3.0||||||0.0000|-0.0005|B0.0670||0.3278|0.2528|-0.26|-0.29|-0.000060|-55.93|49.94|-9.88|',
  '2|v|29DEC23 (3)|-3.0||||||0.0000|-0.0005|B0.0670||0.3278|0.2528|-0.26|-0.29|-0.000060|-55.93|49.94|-9.88|',
  '3||BTC-29DEC23-45000-C|-1.0|-|B0.0465|B0.0170|-||0.0000|-0.0002|B0.0295|63.4%|0.1172|0.0922|-0.16|-0.18|-0.000040|-30.57|25.13|-6.00|Close',
  '3||BTC-29DEC23-50000-C|-1.0|-|B0.0350|B0.0087|-||0.0000|-0.0002|B0.0263|75.1%|0.1087|0.0837|-0.09|-0.10|-0.000020|-19.89|18.09|-3.23|Close',
  '3||BTC-29DEC23-70000-C|-1.0|-|B0.0130|B0.0018|-||0.0000|-0.0000|B0.0112|86.2%|0.1019|0.0769|-0.02|-0.02|-0.000000|-5.47|6.72|-0.65|Close',
].map((line) => {
  const [level, mark, name, ...rest] = line.split('|');
  rest.splice(5, 1);
  const icon = mark ? `<svg class="${mark === '>' ? 'side' : ''}" width="8" height="5"><use href="#chevron"/></svg>` : '';
  const cells = rest.map((value, i) => {
    const cls = i === 7 || i === 8 ? ' class="up"' : '';
    if (value === 'Close') return '<td><button>Close</button></td>';
    return `<td${cls}>${value.replace('B', coin)}</td>`;
  }).join('');
  return `<tr><td><div class="tree level-${level}">${icon}${name}</div></td>${cells}</tr>`;
}).join('');
```
